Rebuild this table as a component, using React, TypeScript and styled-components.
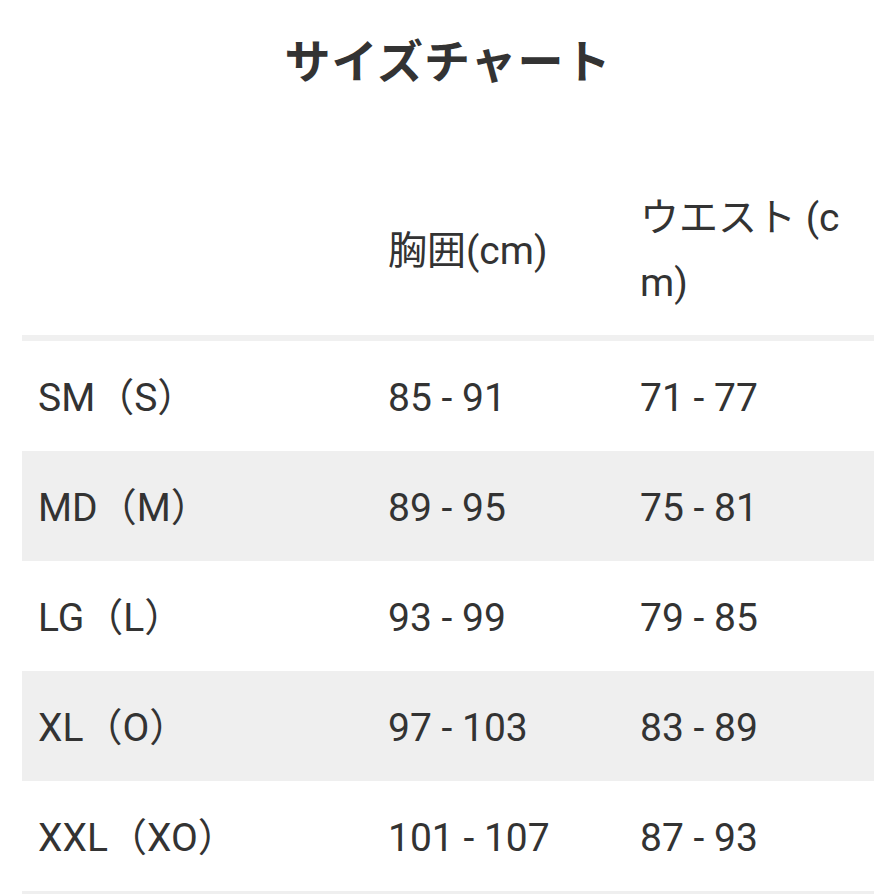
import React from 'react';
import styled, { createGlobalStyle } from 'styled-components';

const GlobalStyle = createGlobalStyle`
  html, body {
    margin: 0;
    padding: 0;
    background: #ffffff;
  }
  body {
    font-family: Roboto, "Noto Sans CJK JP", sans-serif;
    color: #333333;
  }
  *, *::before, *::after {
    box-sizing: border-box;
  }
`;

const Page = styled.div`
  width: 895px;
  padding: 0 21px 0 22px;
`;

const Title = styled.h1`
  margin: 0;
  padding-top: 35px;
  margin-bottom: 86px;
  font-family: "Noto Sans CJK JP", sans-serif;
  font-weight: 700;
  font-size: 46px;
  line-height: 46px;
  text-align: center;
  color: #333333;
  letter-spacing: 1px;
`;

const Table = styled.table`
  width: 852px;
  border-collapse: collapse;
  table-layout: fixed;
`;

const HeadRow = styled.tr`
  border-bottom: 6px solid #f0f0f0;
`;

const HeadCell = styled.th`
  padding: 19px 16px;
  text-align: left;
  vertical-align: middle;
  font-weight: 400;
  font-size: 39px;
  line-height: 65px;
  word-break: break-all;
  color: #333333;
`;

const BodyRow = styled.tr<{ $shaded: boolean }>`
  background: ${p => (p.$shaded ? '#efefef' : '#ffffff')};
  &:last-child {
    border-bottom: 3px solid #efefef;
  }
`;

const Cell = styled.td`
  padding: 25px 16px 20px;
  font-size: 39px;
  line-height: 65px;
  vertical-align: middle;
  white-space: nowrap;
  color: #333333;
`;

const rows = [
  { size: 'SM（S）', chest: '85 - 91', waist: '71 - 77' },
  { size: 'MD（M）', chest: '89 - 95', waist: '75 - 81' },
  { size: 'LG（L）', chest: '93 - 99', waist: '79 - 85' },
  { size: 'XL（O）', chest: '97 - 103', waist: '83 - 89' },
  { size: 'XXL（XO）', chest: '101 - 107', waist: '87 - 93' },
];

export default function App() {
  return (
    <Page>
      <GlobalStyle />
      <Title>サイズチャート</Title>
      <Table>
        <colgroup>
          <col style={{ width: 350 }} />
          <col style={{ width: 252 }} />
          <col style={{ width: 250 }} />
        </colgroup>
        <thead>
          <HeadRow>
            <HeadCell></HeadCell>
            <HeadCell>胸囲(cm)</HeadCell>
            <HeadCell>ウエスト (cm)</HeadCell>
          </HeadRow>
        </thead>
        <tbody>
          {rows.map((r, i) => (
            <BodyRow key={r.size} $shaded={i % 2 === 1}>
              <Cell>{r.size}</Cell>
              <Cell>{r.chest}</Cell>
              <Cell>{r.waist}</Cell>
            </BodyRow>
          ))}
        </tbody>
      </Table>
    </Page>
  );
}
